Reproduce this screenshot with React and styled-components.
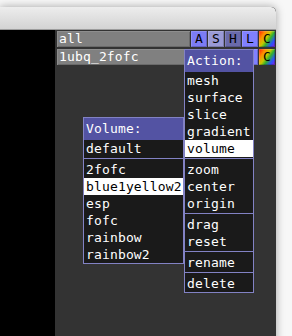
import React from 'react';
import styled, { createGlobalStyle } from 'styled-components';

const Global = createGlobalStyle`
  html, body { margin: 0; padding: 0; background: #f7f7f7; }
  body { font-family: "DejaVu Sans Mono", "Liberation Mono", monospace; }
  * { box-sizing: border-box; }
`;

const Screen = styled.div`
  width: 292px;
  height: 336px;
  overflow: hidden;
  padding-top: 7px;
  background: #f7f7f7;
`;

const Window = styled.div`
  width: 276px;
  height: 340px;
  display: flex;
  flex-direction: column;
  border-top-right-radius: 5px;
  box-shadow: 0 0 9px rgba(0, 0, 0, 0.35);
  overflow: hidden;
  background: #333;
`;

const TitleBar = styled.div`
  height: 23px;
  flex: none;
  background: linear-gradient(#ededed, #d3d3d3);
  border-bottom: 1px solid #9c9c9c;
  border-top-right-radius: 5px;
`;

const Body = styled.div`
  flex: 1;
  display: flex;
  min-height: 0;
`;

const Viewport = styled.div`
  width: 55px;
  flex: none;
  background: #000;
`;

const Panel = styled.div`
  flex: 1;
  position: relative;
  background: #333;
  padding: 1px 1px 0 2px;
  display: flex;
  flex-direction: column;
  gap: 2px;
  font-size: 13px;
  letter-spacing: 0.15px;
`;

const ObjRow = styled.div`
  display: flex;
  height: 16px;
  gap: 1px;
`;

const Name = styled.div`
  flex: 1;
  background: #808080;
  color: #fff;
  line-height: 16px;
  padding-left: 2px;
  white-space: nowrap;
  box-shadow: inset 1px 1px 0 #8e8e8e, inset -1px -1px 0 #6a6a6a;
`;

const Btn = styled.div`
  width: 16px;
  flex: none;
  background: ${(p) => p.$bg};
  color: #000;
  line-height: 16px;
  text-align: center;
  box-shadow: inset 1px 1px 0 rgba(255, 255, 255, 0.15), inset -1px -1px 0 rgba(0, 0, 0, 0.2);
`;

const Menu = styled.div`
  position: absolute;
  left: ${(p) => p.$left}px;
  top: ${(p) => p.$top}px;
  width: ${(p) => p.$width}px;
  border: 1px solid #8282c4;
  background: #1a1a1a;
  color: #fff;
  white-space: nowrap;
`;

const MenuTitle = styled.div`
  height: 22px;
  line-height: 22px;
  background: #5353a3;
  padding-left: 2px;
`;

const MenuItem = styled.div`
  height: 17px;
  line-height: 17px;
  padding-left: 2px;
  background: ${(p) => (p.$active ? '#fff' : 'transparent')};
  color: ${(p) => (p.$active ? '#000' : '#fff')};
`;

const Sep = styled.div`
  height: 1px;
  margin: 1px 0 2px;
  background: #8282c4;
`;

const rainbow =
  'linear-gradient(125deg, #ff1a00 0%, #ff8c00 25%, #c8c800 45%, #30b030 60%, #2a50ff 80%, #9020d0 100%)';

const buttons = [
  { k: 'A', bg: '#7c7cf4' },
  { k: 'S', bg: '#9a9ad6' },
  { k: 'H', bg: '#6a6aaa' },
  { k: 'L', bg: '#8080ff' },
  { k: 'C', bg: rainbow },
];

// second row's A/S/H/L buttons lie under the open Action menu
const objects = [
  { name: 'all', covered: false },
  { name: '1ubq_2fofc', covered: true },
];

const actionGroups = [
  ['mesh', 'surface', 'slice', 'gradient', 'volume'],
  ['zoom', 'center', 'origin'],
  ['drag', 'reset'],
  ['rename'],
  ['delete'],
];

const volumeGroups = [
  ['default'],
  ['2fofc', 'blue1yellow2', 'esp', 'fofc', 'rainbow', 'rainbow2'],
];

function PopMenu({ title, groups, active, left, top, width }) {
  return (
    <Menu $left={left} $top={top} $width={width}>
      <MenuTitle>{title}</MenuTitle>
      {groups.map((g, gi) => (
        <React.Fragment key={gi}>
          {gi > 0 && <Sep />}
          {g.map((it) => (
            <MenuItem key={it} $active={it === active}>
              {it}
            </MenuItem>
          ))}
        </React.Fragment>
      ))}
    </Menu>
  );
}

export default function App() {
  return (
    <>
      <Global />
      <Screen>
        <Window>
          <TitleBar />
          <Body>
            <Viewport />
            <Panel>
              {objects.map((o) => (
                <ObjRow key={o.name}>
                  <Name>{o.name}</Name>
                  {buttons.map((b) => (
                    <Btn key={b.k} $bg={b.bg}>
                      {o.covered && b.k !== 'C' ? '' : b.k}
                    </Btn>
                  ))}
                </ObjRow>
              ))}
              <PopMenu
                title="Volume:"
                groups={volumeGroups}
                active="blue1yellow2"
                left={28}
                top={87}
                width={101}
              />
              <PopMenu
                title="Action:"
                groups={actionGroups}
                active="volume"
                left={129}
                top={19}
                width={70}
              />
            </Panel>
          </Body>
        </Window>
      </Screen>
    </>
  );
}
